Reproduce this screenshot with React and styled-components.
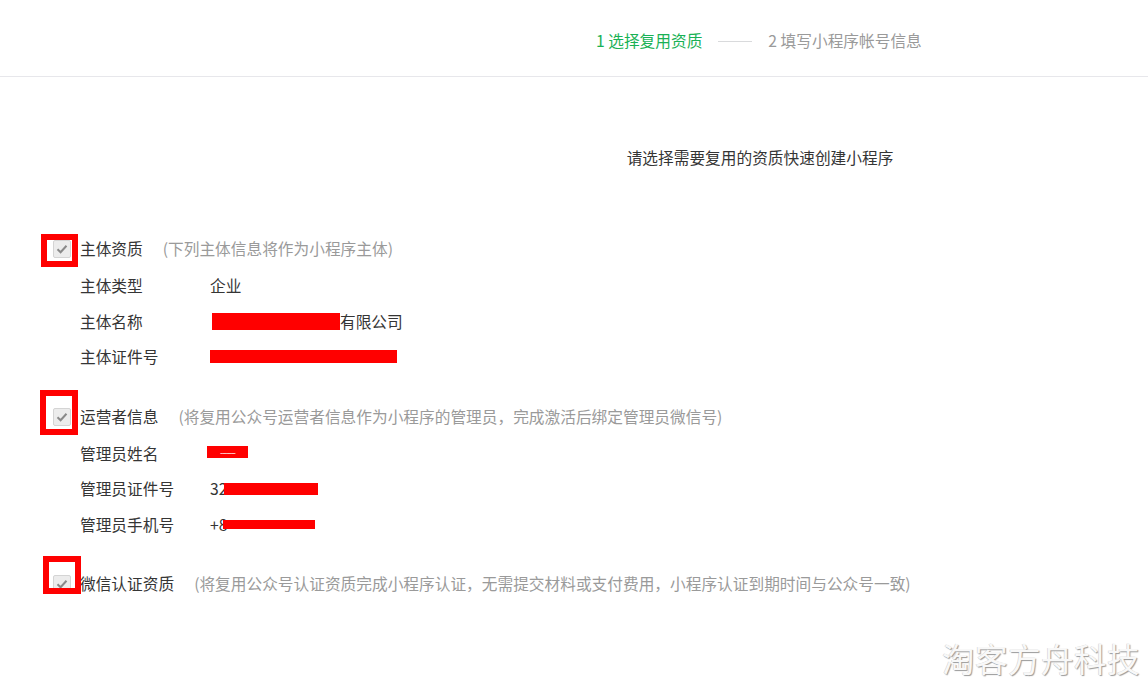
import React from 'react';
import styled, { createGlobalStyle } from 'styled-components';

const Global = createGlobalStyle`
  html, body {
    margin: 0;
    padding: 0;
    background: #fff;
  }
  body {
    font-family: "Noto Sans CJK SC", "Noto Sans", "Liberation Sans", sans-serif;
    font-size: 15.7px;
    color: #353535;
  }
`;

const Page = styled.div`
  position: relative;
  width: 1148px;
  height: 688px;
  overflow: hidden;
`;

const Header = styled.div`
  height: 70px;
  padding-top: 6px;
  border-bottom: 1px solid #e7e7eb;
  display: flex;
  align-items: center;
  padding-left: 596px;
  box-sizing: content-box;
`;

const Step = styled.span`
  line-height: 24px;
  color: ${p => (p.active ? '#19b155' : '#9a9a9a')};
  white-space: nowrap;
`;

const StepLine = styled.span`
  width: 34px;
  height: 1px;
  background: #d9dadc;
  margin: 0 16px 0 16px;
`;

const Intro = styled.div`
  padding: 69px 0 0 372px;
  text-align: center;
  line-height: 24px;
  color: #353535;
`;

const Content = styled.div`
  padding: 67px 0 0 53px;
  display: flex;
  flex-direction: column;
  gap: 30px;
`;

const Section = styled.div`
  display: flex;
  flex-direction: column;
`;

const TitleRow = styled.div`
  display: flex;
  align-items: center;
  height: 24px;
  line-height: 24px;
`;

const CheckWrap = styled.span`
  position: relative;
  width: 18px;
  height: 18px;
  margin-right: 9px;
  flex-shrink: 0;
`;

const Check = styled.span`
  display: flex;
  align-items: center;
  justify-content: center;
  width: 18px;
  height: 18px;
  box-sizing: border-box;
  border: 1px solid #d4d4d4;
  background: #ececec;
  border-radius: 2px;
`;

const Mark = styled.span`
  position: absolute;
  left: ${p => p.x}px;
  top: ${p => p.y}px;
  width: ${p => p.w}px;
  height: ${p => p.h}px;
  border: 6px solid #ff0000;
  box-sizing: border-box;
`;

const Title = styled.span`
  color: #353535;
`;

const Hint = styled.span`
  margin-left: 20px;
  color: #9a9a9a;
`;

const Rows = styled.div`
  margin-top: 7px;
  padding-left: 27px;
  display: flex;
  flex-direction: column;
`;

const Row = styled.div`
  display: flex;
  align-items: center;
  height: 35.5px;
`;

const Label = styled.span`
  width: 130px;
  flex-shrink: 0;
`;

const Value = styled.span`
  display: flex;
  align-items: center;
  white-space: nowrap;
`;

const Redact = styled.span`
  display: inline-flex;
  align-items: center;
  justify-content: center;
  width: ${p => p.w}px;
  height: ${p => p.h}px;
  margin-left: ${p => p.ml || 0}px;
  margin-top: ${p => p.mt || 0}px;
  background: #ff0000;
  color: #fff;
  font-size: 9px;
  line-height: 1;
  letter-spacing: -1px;
`;

const Watermark = styled.div`
  position: absolute;
  right: 8px;
  bottom: 8px;
  font-size: 32.5px;
  line-height: 44px;
  color: #f8f8f8;
  letter-spacing: 0.5px;
  text-shadow: 1px 1px 1px #9a9a9a, -0.5px -0.5px 0 #d0d0d0;
`;

const CheckIcon = () => (
  <svg width="12" height="10" viewBox="0 0 12 10">
    <path d="M1.5 5.2 L4.6 8.2 L10.5 1.8" fill="none" stroke="#8a8a8a" strokeWidth="2" />
  </svg>
);

const CheckBox = ({ mark }) => (
  <CheckWrap>
    <Check>
      <CheckIcon />
    </Check>
    <Mark x={mark.x} y={mark.y} w={mark.w} h={mark.h} />
  </CheckWrap>
);

const sections = [
  {
    title: '主体资质',
    hint: '(下列主体信息将作为小程序主体)',
    mark: { x: -12, y: -6, w: 37, h: 33 },
    rows: [
      { label: '主体类型', value: <>企业</> },
      { label: '主体名称', value: <><Redact w={128} h={17} ml={2} mt={1} />有限公司</> },
      { label: '主体证件号', value: <Redact w={187} h={13} mt={-1} /> },
    ],
  },
  {
    title: '运营者信息',
    hint: '(将复用公众号运营者信息作为小程序的管理员，完成激活后绑定管理员微信号)',
    mark: { x: -13, y: -18, w: 38, h: 45 },
    rows: [
      { label: '管理员姓名', value: <Redact w={41} h={12} ml={-3} mt={-2}>-------</Redact> },
      { label: '管理员证件号', value: <>32<Redact w={94} h={12} ml={-3} /></> },
      { label: '管理员手机号', value: <>+8<Redact w={92} h={9} ml={-4} /></> },
    ],
  },
  {
    title: '微信认证资质',
    hint: '(将复用公众号认证资质完成小程序认证，无需提交材料或支付费用，小程序认证到期时间与公众号一致)',
    mark: { x: -10, y: -19, w: 38, h: 38 },
    rows: [],
  },
];

export default function App() {
  return (
    <Page>
      <Global />
      <Header>
        <Step active>1 选择复用资质</Step>
        <StepLine />
        <Step>2 填写小程序帐号信息</Step>
      </Header>
      <Intro>请选择需要复用的资质快速创建小程序</Intro>
      <Content>
        {sections.map(s => (
          <Section key={s.title}>
            <TitleRow>
              <CheckBox mark={s.mark} />
              <Title>{s.title}</Title>
              <Hint>{s.hint}</Hint>
            </TitleRow>
            {s.rows.length > 0 && (
              <Rows>
                {s.rows.map(r => (
                  <Row key={r.label}>
                    <Label>{r.label}</Label>
                    <Value>{r.value}</Value>
                  </Row>
                ))}
              </Rows>
            )}
          </Section>
        ))}
      </Content>
      <Watermark>淘客方舟科技</Watermark>
    </Page>
  );
}
